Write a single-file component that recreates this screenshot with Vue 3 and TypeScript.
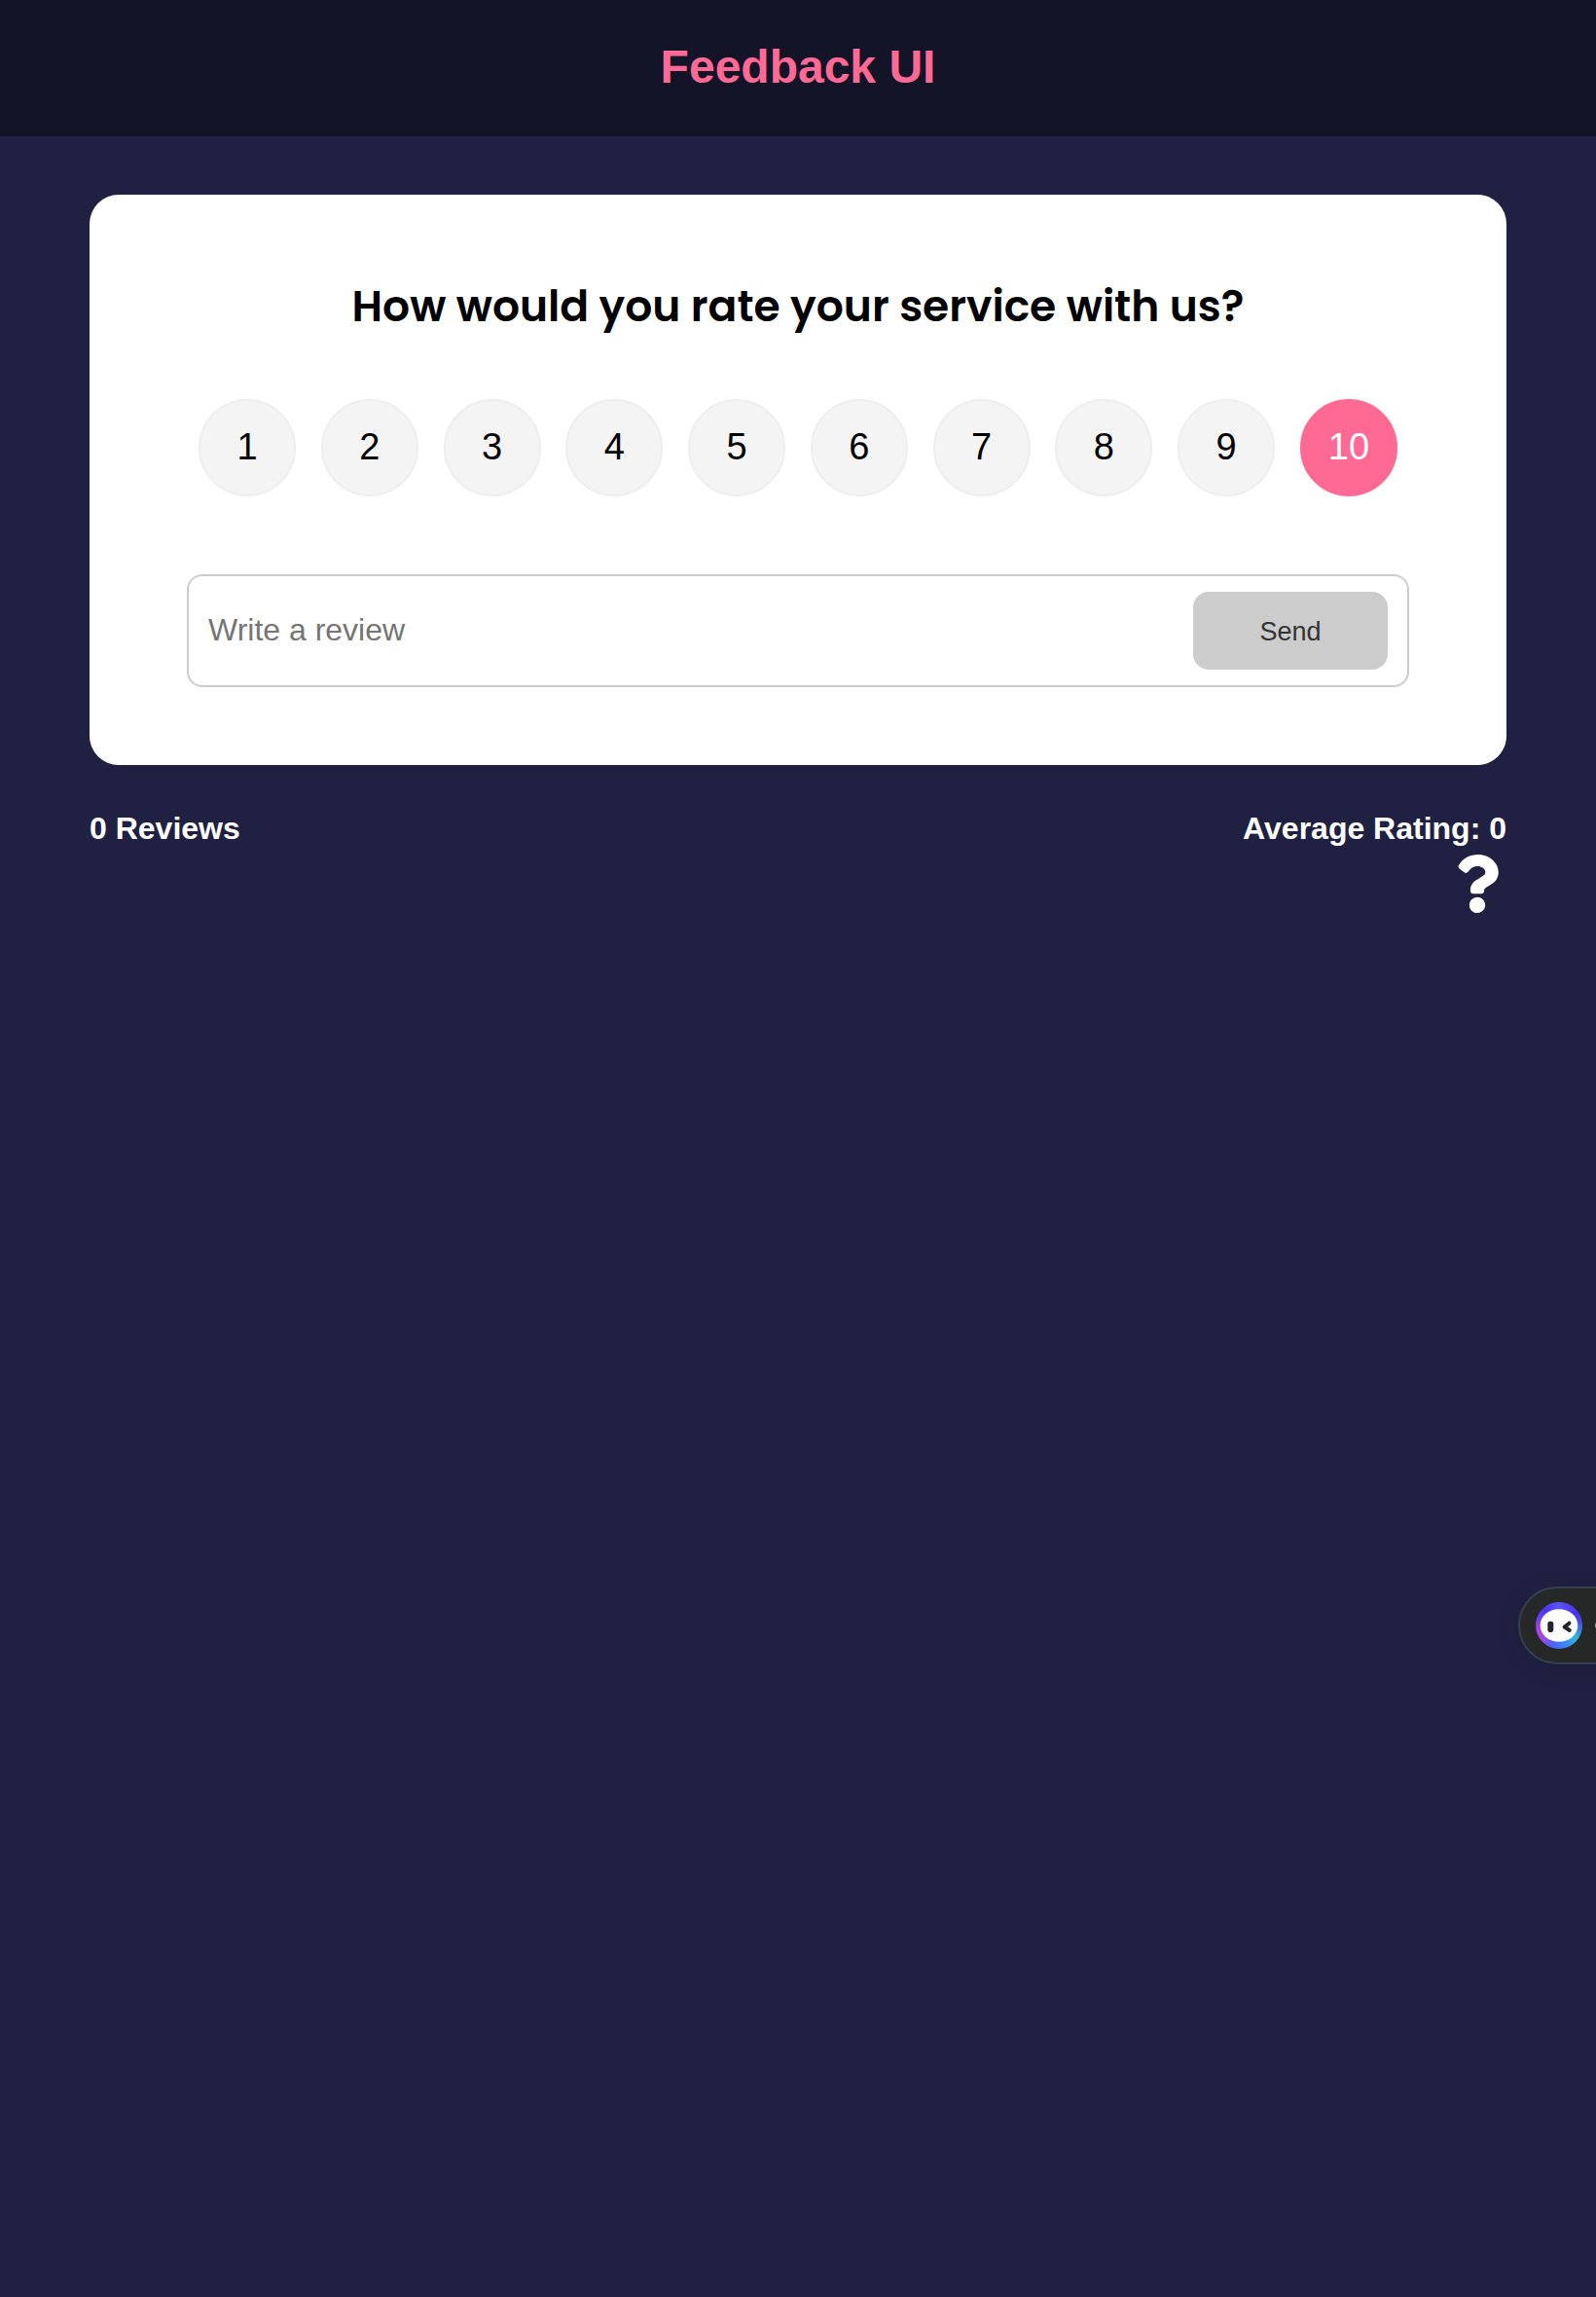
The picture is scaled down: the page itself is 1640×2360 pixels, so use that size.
<script setup lang="ts">
import { computed, ref } from 'vue'

interface Review {
  text: string
  rating: number
}

const ratings: number[] = Array.from({ length: 10 }, (_, i) => i + 1)
const selected = ref<number>(10)
const text = ref<string>('')
const reviews = ref<Review[]>([])

const average = computed<number>(() => {
  if (!reviews.value.length) return 0
  const sum = reviews.value.reduce((total, item) => total + item.rating, 0)
  return Math.round((sum / reviews.value.length) * 10) / 10
})

function submit(): void {
  if (!text.value.trim()) return
  reviews.value.unshift({ text: text.value, rating: selected.value })
  text.value = ''
}
</script>

<template>
  <div class="page">
    <header class="header">
      <h1>Feedback UI</h1>
    </header>

    <main class="container">
      <form class="card" @submit.prevent="submit">
        <h2>How would you rate your service with us?</h2>
        <ul class="rating">
          <li v-for="n in ratings" :key="n">
            <input :id="`rate-${n}`" v-model="selected" type="radio" name="rating" :value="n" />
            <label :for="`rate-${n}`">{{ n }}</label>
          </li>
        </ul>
        <div class="review-box">
          <input v-model="text" type="text" placeholder="Write a review" aria-label="Write a review" />
          <button type="submit">Send</button>
        </div>
      </form>

      <div class="stats">
        <h4>{{ reviews.length }} Reviews</h4>
        <h4>Average Rating: {{ average }}</h4>
      </div>

      <a class="about" href="#about" aria-label="About">
        <svg viewBox="0 0 384 512" fill="currentColor" aria-hidden="true">
          <path d="M202.021 0C122.202 0 70.503 32.703 29.914 91.026c-7.363 10.58-5.093 25.086 5.178 32.874l43.138 32.709c10.373 7.865 25.132 6.026 33.253-4.148 25.049-31.381 43.63-49.449 82.757-49.449 30.764 0 68.816 19.799 68.816 49.631 0 22.552-18.617 34.134-48.993 51.164-35.423 19.86-82.299 44.576-82.299 106.405V320c0 13.255 10.745 24 24 24h72.471c13.255 0 24-10.745 24-24v-5.773c0-42.86 125.268-44.645 125.268-160.627C377.504 66.256 286.902 0 202.021 0zM192 373.459c-38.196 0-69.271 31.075-69.271 69.271 0 38.195 31.075 69.27 69.271 69.27s69.271-31.075 69.271-69.27-31.075-69.271-69.271-69.271z" />
        </svg>
      </a>
    </main>

    <button class="assistant" type="button" aria-label="Assistant">
      <span class="avatar">
        <svg viewBox="0 0 48 48" aria-hidden="true">
          <ellipse cx="24" cy="24" rx="19.300" ry="16.800" fill="#fff" />
          <rect x="12.300" y="19.700" width="6" height="11.300" rx="2.800" fill="#222624" />
          <path d="M34.500 21.700L29.600 25.600L34.800 29" fill="none" stroke="#222624" stroke-width="4" stroke-linecap="round" stroke-linejoin="round" />
        </svg>
      </span>
      <span class="dot"></span>
    </button>
  </div>
</template>

<style>
body {
  margin: 0;
  background: #202142;
}
</style>

<style scoped>
.page {
  position: relative;
  min-height: 100vh;
  overflow: hidden;
  background: #202142;
  color: #fff;
  font-family: "Liberation Sans", Arial, sans-serif;
}

h1,
h2,
h4,
ul {
  margin: 0;
  padding: 0;
}

.header {
  display: flex;
  align-items: center;
  justify-content: center;
  box-sizing: border-box;
  height: 140px;
  padding-bottom: 2px;
  background: #131428;
  color: #ff6a95;
}

.header h1 {
  font-size: 48px;
  line-height: 56px;
}

.container {
  max-width: 1456px;
  margin: 60px auto 0;
  padding: 0 40px;
}

.card {
  padding: 80px 100px;
  border-radius: 30px;
  background: #fff;
  color: #000;
}

.card h2 {
  font-family: Poppins, Inter, sans-serif;
  font-size: 44px;
  font-weight: 600;
  line-height: 70px;
  text-align: center;
}

.rating {
  display: flex;
  justify-content: space-between;
  margin: 60px 0 80px;
  padding: 0 12px;
  list-style: none;
}

.rating li {
  position: relative;
}

.rating input {
  position: absolute;
  inset: 0;
  margin: 0;
  opacity: 0;
}

.rating label {
  display: flex;
  align-items: center;
  justify-content: center;
  box-sizing: border-box;
  width: 100px;
  height: 100px;
  padding-bottom: 2px;
  border: 2px solid #eee;
  border-radius: 50%;
  background: #f4f4f4;
  font-size: 38px;
  cursor: pointer;
}

.rating label:hover,
.rating input:checked + label {
  border-color: #ff6a95;
  background: #ff6a95;
  color: #fff;
}

.review-box {
  display: flex;
  align-items: center;
  padding: 16px 20px;
  border: 2px solid #ccc;
  border-radius: 16px;
}

.review-box input {
  flex: 1;
  min-width: 0;
  padding: 0 0 2px;
  border: 0;
  outline: 0;
  background: none;
  font: 32px/40px "Liberation Sans", Arial, sans-serif;
}

.review-box input::placeholder {
  color: #757575;
  opacity: 1;
}

.review-box button {
  width: 200px;
  height: 80px;
  padding: 2px 0 0;
  border: 0;
  border-radius: 16px;
  background: #ccc;
  color: #333;
  font: 27px "Liberation Sans", Arial, sans-serif;
}

.stats {
  display: flex;
  justify-content: space-between;
  margin-top: 46px;
}

.stats h4 {
  font-size: 32px;
  line-height: 38px;
}

.about {
  display: block;
  width: 60px;
  margin: 8px 0 0 auto;
  color: #fff;
}

.about svg {
  display: block;
  width: 60px;
  height: 60px;
}

.assistant {
  position: absolute;
  top: 1630px;
  right: -80px;
  display: flex;
  align-items: center;
  gap: 13px;
  box-sizing: border-box;
  width: 160px;
  height: 80px;
  padding: 0 16px;
  border: 2px solid #343f53;
  border-radius: 40px;
  background: #262827;
  box-shadow: 0 4px 24px rgba(0, 0, 0, 0.12);
}

.avatar {
  width: 48px;
  height: 48px;
  border-radius: 50%;
  background: conic-gradient(#5a55f8, #4a30ee 50deg, #4a45f0 80deg, #2fb8d4 125deg, #3b8df5 155deg, #4b64fb 195deg, #a048e4 235deg, #b044dc 255deg, #6a40f0 290deg, #4a35f0 320deg, #5a55f8);
}

.avatar svg {
  display: block;
}

.dot {
  width: 8px;
  height: 8px;
  border-radius: 50%;
  background: #aaa;
}
</style>
